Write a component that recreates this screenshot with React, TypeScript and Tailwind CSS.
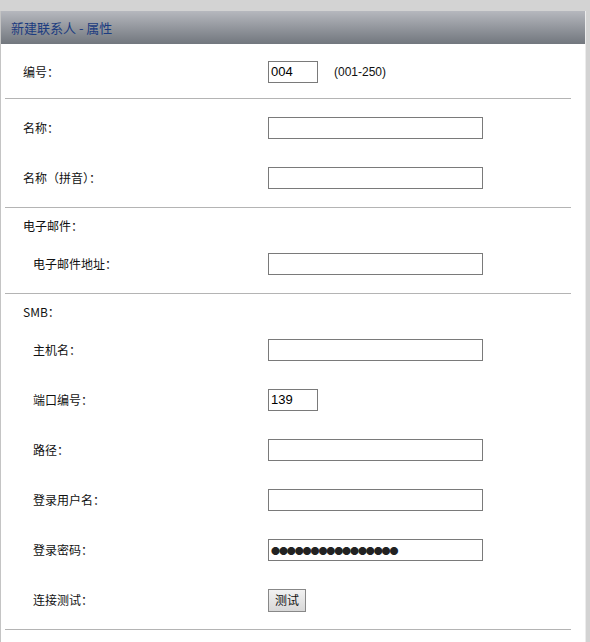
import React from "react"

const font = { fontFamily: '"Noto Sans CJK SC", "Liberation Sans", sans-serif' }

function Row({ label, sub, children }: { label: string; sub?: boolean; children?: React.ReactNode }) {
  return (
    <div className="flex h-[50px] items-center">
      <div className={`w-[267px] text-[12px] text-[#111] ${sub ? "pl-[32px]" : "pl-[22px]"}`}>{label}</div>
      <div className="flex items-center">{children}</div>
    </div>
  )
}

function Field({ value, small }: { value?: string; small?: boolean }) {
  return (
    <div
      className={`flex h-[22px] items-center border border-[#7a7a7a] bg-white pl-[2px] text-[13px] text-black ${small ? "w-[50px]" : "w-[215px]"}`}
      style={{ fontFamily: '"Liberation Sans", Arial, sans-serif' }}
    >
      {value}
    </div>
  )
}

function Divider() {
  return <div className="ml-[4px] h-px w-[566px] bg-[#b4b4b4]" />
}

export default function App() {
  return (
    <div className="flex h-[642px] w-[590px] flex-col bg-[#d3d3d3]" style={font}>
      <div className="h-[11px]" />
      <div className="flex flex-1">
        <div className="flex w-[585px] flex-col border-l border-[#c4c4c4] bg-white">
          {/* header */}
          <div className="flex h-[33px] items-center bg-gradient-to-b from-[#b6b8be] to-[#72777e] pl-[10px] text-[13px] text-[#1c3c80]">
            新建联系人 - 属性
          </div>

          <div className="pt-[3px] pb-px">
            <Row label="编号：">
              <Field value="004" small />
              <span className="ml-[16px] text-[12px] text-[#111]" style={{ fontFamily: '"Liberation Sans", Arial, sans-serif' }}>
                (001-250)
              </span>
            </Row>
          </div>
          <Divider />

          <div className="py-[4px]">
            <Row label="名称：">
              <Field />
            </Row>
            <Row label="名称（拼音）：">
              <Field />
            </Row>
          </div>
          <Divider />

          <div className="py-[4px]">
            <div className="flex h-[27px] items-center pl-[22px] text-[12px] text-[#111]">电子邮件：</div>
            <Row label="电子邮件地址：" sub>
              <Field />
            </Row>
          </div>
          <Divider />

          <div className="py-[4px]">
            <div className="flex h-[27px] items-center pl-[22px] text-[12px] text-[#111]">SMB：</div>
            <Row label="主机名：" sub>
              <Field />
            </Row>
            <Row label="端口编号：" sub>
              <Field value="139" small />
            </Row>
            <Row label="路径：" sub>
              <Field />
            </Row>
            <Row label="登录用户名：" sub>
              <Field />
            </Row>
            <Row label="登录密码：" sub>
              <div className="flex h-[22px] w-[215px] items-center border border-[#7a7a7a] bg-white pl-[2px] text-[9px] leading-none tracking-[-1.1px] text-[#222]">
                ●●●●●●●●●●●●●●●●
              </div>
            </Row>
            <Row label="连接测试：" sub>
              <button className="h-[23px] w-[38px] border border-[#888] bg-gradient-to-b from-[#f2f2f2] to-[#d8d8d8] text-[12px] text-[#111]">
                测试
              </button>
            </Row>
          </div>
          <Divider />
          <div className="flex-1" />
        </div>
        <div className="w-[5px] border-l border-[#ececec]" />
      </div>
    </div>
  )
}
